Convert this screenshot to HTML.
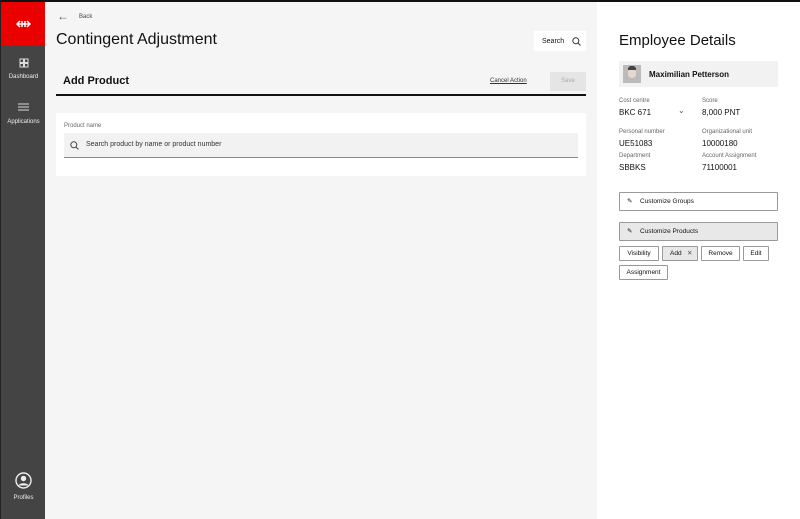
<!DOCTYPE html>
<html><head><style>
*{margin:0;padding:0;box-sizing:border-box}
body{width:800px;height:519px;overflow:hidden;font-family:"Liberation Sans",sans-serif;background:#fff;position:relative;color:#111}
.top{position:absolute;left:0;top:0;width:800px;height:2px;background:#111}
.side{position:absolute;left:0;top:2px;width:45px;height:517px;background:#444;border-left:1px solid #222}
.red{position:absolute;left:0;top:0;width:45px;height:44px;background:#eb0000}
.nav{position:absolute;left:0;width:45px;text-align:center;color:#eee;font-size:6px}
.main{position:absolute;left:45px;top:2px;width:552px;height:517px;background:#f5f5f5}
.abs{position:absolute}
.right{position:absolute;left:597px;top:2px;width:203px;height:517px;background:#fff}
.lbl{font-size:6px;color:#666}
.val{font-size:8px;color:#111}
.btn{position:absolute;border:1px solid #999;background:#fff;font-size:6.5px;height:15px;line-height:13px;text-align:center;border-radius:1px}
</style></head><body>
<div class="top"></div>
<div class="side">
 <div class="red"><svg class="abs" style="left:15px;top:18px" width="15" height="8" viewBox="0 0 15 8"><path d="M1 4h13M4 1L1 4l3 3M11 1l3 3-3 3M6 1v6M9 1v6" stroke="#fff" stroke-width="1.5" fill="none"/></svg></div>
 <div class="nav" style="top:56px"><svg width="10" height="10" viewBox="0 0 10 10"><rect x="1" y="1" width="3.5" height="3.5" fill="none" stroke="#ddd"/><rect x="5.5" y="1" width="3.5" height="3.5" fill="none" stroke="#ddd"/><rect x="1" y="5.5" width="3.5" height="3.5" fill="none" stroke="#ddd"/><rect x="5.5" y="5.5" width="3.5" height="3.5" fill="none" stroke="#ddd"/></svg><div style="margin-top:4px">Dashboard</div></div>
 <div class="nav" style="top:100px"><svg width="11" height="10" viewBox="0 0 11 10"><path d="M0 2h11M0 5h11M0 8h11" stroke="#ddd" stroke-width="1"/></svg><div style="margin-top:5px">Applications</div></div>
 <div class="nav" style="top:470px"><svg width="17" height="17" viewBox="0 0 17 17"><circle cx="8.5" cy="8.5" r="7.5" fill="none" stroke="#eee" stroke-width="1.4"/><circle cx="8.5" cy="6.5" r="2.7" fill="#eee"/><path d="M3.5 13.5c1-3 9-3 10 0" fill="#eee"/></svg><div style="margin-top:4px">Profiles</div></div>
</div>
<div class="main">
 <div class="abs" style="left:12px;top:7px;font-size:12px;color:#666">&#8592;</div>
 <div class="abs" style="left:34px;top:12px;font-size:6px;color:#444">Back</div>
 <div class="abs" style="left:11px;top:29px;font-size:16px">Contingent Adjustment</div>
 <div class="abs" style="left:489px;top:29px;width:52px;height:20px;background:#fff;font-size:7px;line-height:22px;padding-left:8px">Search <svg style="position:absolute;left:38px;top:6px" width="9" height="9" viewBox="0 0 9 9"><circle cx="3.8" cy="3.8" r="3" fill="none" stroke="#333"/><path d="M6 6l2.5 2.5" stroke="#333"/></svg></div>
 <div class="abs" style="left:18px;top:73px;font-size:11px;font-weight:bold">Add Product</div>
 <div class="abs" style="left:445px;top:76px;font-size:6px;color:#333;text-decoration:underline">Cancel Action</div>
 <div class="abs" style="left:505px;top:70px;width:36px;height:19px;background:#e5e5e5;font-size:6px;color:#aaa;text-align:center;line-height:19px">Save</div>
 <div class="abs" style="left:11px;top:92px;width:530px;height:2px;background:#111"></div>
 <div class="abs" style="left:11px;top:111px;width:530px;height:63px;background:#fff">
  <div class="abs lbl" style="left:8px;top:10px">Product name</div>
  <div class="abs" style="left:8px;top:20px;width:514px;height:25px;background:#f2f2f2;border-bottom:1px solid #888">
   <svg class="abs" style="left:6px;top:8px" width="9" height="9" viewBox="0 0 9 9"><circle cx="3.8" cy="3.8" r="3" fill="none" stroke="#444"/><path d="M6 6l2.5 2.5" stroke="#444"/></svg>
   <div class="abs" style="left:22px;top:8px;font-size:7px;color:#333">Search product by name or product number</div>
  </div>
 </div>
</div>
<div class="right">
 <div class="abs" style="left:22px;top:30px;font-size:15px">Employee Details</div>
 <div class="abs" style="left:22px;top:59px;width:159px;height:26px;background:#f2f2f2">
  <div class="abs" style="left:4px;top:4px;width:18px;height:18px;background:#bbb"><div class="abs" style="left:5px;top:3px;width:8px;height:10px;border-radius:4px;background:#e8d8cc"></div><div class="abs" style="left:5px;top:1px;width:8px;height:4px;background:#444;border-radius:3px 3px 0 0"></div></div>
  <div class="abs" style="left:30px;top:9px;font-size:8px;font-weight:bold">Maximilian Petterson</div>
 </div>
 <div class="abs lbl" style="left:22px;top:96px">Cost centre</div><div class="abs val" style="left:22px;top:106px">BKC 671</div>
 <div class="abs" style="left:81px;top:104px;font-size:8px;color:#555">&#8964;</div>
 <div class="abs lbl" style="left:105px;top:96px">Score</div><div class="abs val" style="left:105px;top:106px">8,000 PNT</div>
 <div class="abs lbl" style="left:22px;top:127px">Personal number</div><div class="abs val" style="left:22px;top:137px">UE51083</div>
 <div class="abs lbl" style="left:105px;top:127px">Organizational unit</div><div class="abs val" style="left:105px;top:137px">10000180</div>
 <div class="abs lbl" style="left:22px;top:151px">Department</div><div class="abs val" style="left:22px;top:161px">SBBKS</div>
 <div class="abs lbl" style="left:105px;top:151px">Account Assignment</div><div class="abs val" style="left:105px;top:161px">71100001</div>
 <div class="btn" style="left:22px;top:190px;width:159px;height:19px;line-height:17px;text-align:left;padding-left:20px">Customize Groups<span style="position:absolute;left:7px;top:0">&#9998;</span></div>
 <div class="btn" style="left:22px;top:220px;width:159px;height:19px;line-height:17px;text-align:left;padding-left:20px;background:#e8e8e8">Customize Products<span style="position:absolute;left:7px;top:0">&#9998;</span></div>
 <div class="btn" style="left:22px;top:244px;width:40px">Visibility</div>
 <div class="btn" style="left:65px;top:244px;width:36px;background:#e8e8e8;text-align:left;padding-left:7px">Add <span style="position:absolute;left:24px;color:#555">&#10005;</span></div>
 <div class="btn" style="left:104px;top:244px;width:39px">Remove</div>
 <div class="btn" style="left:146px;top:244px;width:26px">Edit</div>
 <div class="btn" style="left:22px;top:263px;width:49px">Assignment</div>
</div>
</body></html>
